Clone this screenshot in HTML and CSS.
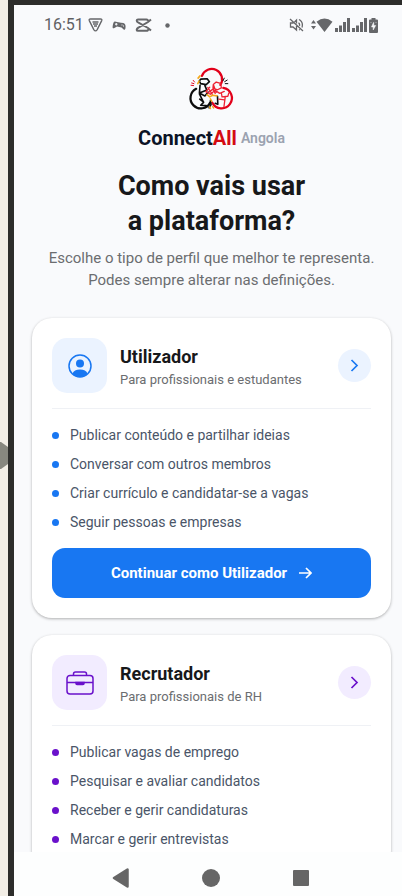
FILE: index.html
```html
<!DOCTYPE html>
<html lang="pt">
<head>
<meta charset="utf-8">
<meta name="viewport" content="width=device-width, initial-scale=1">
<title>ConnectAll Angola</title>
<link rel="stylesheet" href="styles.css">
</head>
<body>
<svg class="edge-arrow" viewBox="0 0 8 27" aria-hidden="true"><path d="M0 0h1l7 5v17l-7 5H0z" fill="#87877f"/></svg>
<div class="device">
  <header class="status">
    <div class="status-left">
      <span class="clock">16:51</span>
      <svg width="15" height="14" viewBox="0 0 15 14" fill="none" stroke="#66676a"><path d="M2.500 1h10q1.800 0 1.200 1.600L9.200 11.600q-1.700 2.600-3.400 0L1.300 2.600Q.7 1 2.500 1z" stroke-width="1.400"/><path d="M4.500 4h6M5 6h5M6 8h3" stroke-width="1.600"/></svg>
      <svg width="14" height="11" viewBox="0 0 14 11"><path d="M3 1.500l2 .6 4 .6 2.400.2c2 .6 2.600 3 2 5.600-.3 1.700-1.800 1.500-2.300.6L9.500 7.500 5 6.500 2.400 8C1 8.800.3 8 .7 6 1.100 3.500 1.600 1.500 3 1.500z" fill="#66676a"/><path d="M3 4.200h2.500M4.250 3v2.500M9.500 5h1M11 6h1" stroke="#f9fafc"/></svg>
      <svg width="17" height="14" viewBox="0 0 17 14" fill="none" stroke="#66676a" stroke-width="2"><path d="M16 1.500L13 4 3.500 9.500q-1.800.9-1.800 2.300.1 1 1.300 1h8.500q1.500 0 1.500-1.600M16 12.500L13 10 3.500 4.700Q1.700 3.800 1.700 2.500q.1-1 1.300-1h8.500Q13 1.500 13 3"/></svg>
      <svg class="more" width="5" height="5" viewBox="0 0 5 5"><circle cx="2.500" cy="2.500" r="2.200" fill="#66676a"/></svg>
    </div>
    <div class="status-right">
      <svg class="mute" width="15" height="14" viewBox="0 0 15 14" fill="none" stroke="#66676a" stroke-width="1.300"><path d="M1 1l13 12M4.500 5H1.500v4h2.500l3.500 3V8M5.500 4l2-2v3.500M9.500 4.800q1.500 1 1 3M10 1.500q4.500 2.300 3 8M10 12l1-.5"/></svg>
      <svg width="22" height="14" viewBox="0 0 22 14" fill="#66676a"><path d="M0 5.500L2.500 2 5 5.500zM0 8h5l-2.500 3.500zM5.500 3.700q8-6.500 16 0L13.500 14z"/></svg>
      <svg width="15" height="14" viewBox="0 0 15 14" fill="#66676a"><path d="M0 10h3v4H0zM4 7.500h3V14H4zM8 4h3v10H8zM12 0h3v14H12z"/></svg>
      <svg width="15" height="14" viewBox="0 0 15 14" fill="#66676a"><path d="M0 10h3v4H0zM4 7.500h3V14H4zM8 4h3v10H8zM12 0h3v14H12z"/></svg>
      <svg width="9" height="15" viewBox="0 0 9 15"><path d="M2.500 0h4v1.500H8q1 0 1 1V14q0 1-1 1H1q-1 0-1-1V2.500q0-1 1-1h1.500z" fill="#66676a"/><path d="M4.500 4.500L2.500 9h1.700v3l2.500-4.500H4.800V4.500zM1.500 4.500h1M6.500 4.500h1" fill="#f9fafc" stroke="#f9fafc" stroke-width=".5"/></svg>
    </div>
  </header>

  <main class="page">
    <div class="brand">
      <svg class="logo" width="64" height="56" viewBox="0 -8 198 173" fill="none" stroke-width="7" stroke-linecap="round" stroke-linejoin="round" aria-hidden="true">
        <path d="M68 41A32 32 0 1 1 125 69M134 78A32 32 0 1 1 100 124" stroke="#e2001a"/>
        <path d="M50 81A32 32 0 1 0 93 124" stroke="#0c0c0c"/>
        <path d="M64 51l20-1 7 9-10 9-17-3-4-8zM62 70l-2 24 23-9-6-14M60 94l17 9 10-12M60 97l13 26-9 9 17 1M73 122l-12-9M90 140l6-10-2-12M116 104l1 25-8-3" stroke="#0c0c0c" stroke-width="5"/>
        <path d="M133 56l4-8M138 59l8-5M140 65h8" stroke="#0c0c0c" stroke-width="3"/>
        <path d="M36 63l7 2M34 70l8 1M41 55l4 5" stroke="#e2001a" stroke-width="3"/>
        <path d="M103 68l9-8 14 4 2 14-12 6-14-5zM92 76l-12 14 14 8 14-12 15 9 14-6M128 94l2 12 18-2 3-10M140 106l-4 30M90 91l12-9 7 13M120 113l18 2M86 77l14 21M104 70l8 22" stroke="#ee2233" stroke-width="4"/>
        <path d="M56 48l6-7M59 57l-4 8M84 99l8 7 9-5 13 2M98 119l-4-7M92 137l2 5M101 136l3 4" stroke="#f5a81c" stroke-width="5"/>
      </svg>
      <p class="wordmark"><span class="name">Connect<span class="name-accent">All</span></span> <span class="country">Angola</span></p>
    </div>
    <h1>Como vais usar<br>a plataforma?</h1>
    <p class="lead">Escolhe o tipo de perfil que melhor te representa. Podes sempre alterar nas definições.</p>

    <section class="card user" aria-labelledby="t-user">
      <div class="card-head">
        <span class="tile">
          <svg width="24" height="24" viewBox="0 0 24 24" fill="none"><circle cx="12" cy="12" r="11" stroke="currentColor" stroke-width="1.500"/><circle cx="12" cy="9.500" r="4" fill="currentColor"/><path d="M4.500 19.500Q6 15.500 12 15.500t7.500 4Q16.500 23 12 23t-7.500-3.500z" fill="currentColor"/></svg>
        </span>
        <div class="titles">
          <h2 id="t-user">Utilizador</h2>
          <p>Para profissionais e estudantes</p>
        </div>
        <button class="go" type="button" aria-label="Utilizador"><svg width="9" height="13" viewBox="0 0 9 13"><path d="M1.500 1l5.500 5.500L1.500 12"/></svg></button>
      </div>
      <ul>
        <li>Publicar conteúdo e partilhar ideias</li>
        <li>Conversar com outros membros</li>
        <li>Criar currículo e candidatar-se a vagas</li>
        <li>Seguir pessoas e empresas</li>
      </ul>
      <button class="cta" type="button">Continuar como Utilizador
        <svg width="14" height="12" viewBox="0 0 14 12"><path d="M1 6h12M8 1l5 5-5 5"/></svg>
      </button>
    </section>

    <section class="card recruiter" aria-labelledby="t-rec">
      <div class="card-head">
        <span class="tile">
          <svg width="28" height="24" viewBox="0 0 28 24" fill="none" stroke="currentColor" stroke-width="1.500"><rect x="1" y="4.500" width="26" height="18.500" rx="3"/><path d="M7.500 4.500V3q0-2 2-2h9q2 0 2 2v1.500M1 11.500h26"/><path d="M10 11.500h8v1q0 1-1 1h-6q-1 0-1-1z" fill="currentColor"/></svg>
        </span>
        <div class="titles">
          <h2 id="t-rec">Recrutador</h2>
          <p>Para profissionais de RH</p>
        </div>
        <button class="go" type="button" aria-label="Recrutador"><svg width="9" height="13" viewBox="0 0 9 13"><path d="M1.500 1l5.500 5.500L1.500 12"/></svg></button>
      </div>
      <ul>
        <li>Publicar vagas de emprego</li>
        <li>Pesquisar e avaliar candidatos</li>
        <li>Receber e gerir candidaturas</li>
        <li>Marcar e gerir entrevistas</li>
      </ul>
    </section>
  </main>

  <nav class="navbar">
    <button type="button" aria-label="Voltar"><svg width="18" height="20" viewBox="0 0 18 20"><path d="M15.500 1.500v17L2 10z" fill="#666" stroke="#666" stroke-width="2.500" stroke-linejoin="round"/></svg></button>
    <button type="button" aria-label="Início"><svg width="18" height="18" viewBox="0 0 18 18"><circle cx="9" cy="9" r="9" fill="#666"/></svg></button>
    <button type="button" aria-label="Recentes"><svg width="18" height="18" viewBox="0 0 18 18"><rect x="1" y="1" width="16" height="16" rx="1" fill="#666"/></svg></button>
  </nav>
</div>
</body>
</html>
```
FILE: styles.css
```css
* {
  box-sizing: border-box;
  margin: 0;
  padding: 0;
}

body {
  display: flex;
  height: 100vh;
  overflow: hidden;
  padding-left: 8px;
  background: #f2eee6;
  font-family: Roboto, "Liberation Sans", sans-serif;
  color: #17181a;
}

svg {
  display: block;
  flex: none;
}

button {
  border: 0;
  background: none;
  font: inherit;
  color: inherit;
}

.edge-arrow {
  position: absolute;
  left: 0;
  top: 442px;
  width: 8px;
  height: 27px;
}

.device {
  flex: 1;
  min-width: 0;
  display: flex;
  flex-direction: column;
  border: solid #2d2d2b;
  border-width: 5px 0 0 6px;
  background: #f9fafc;
}

.status {
  flex: none;
  display: flex;
  justify-content: space-between;
  align-items: center;
  height: 40px;
  padding: 0 24px 0 30px;
}

.status-left,
.status-right {
  display: flex;
  align-items: center;
}

.status-left {
  gap: 9px;
}

.status-right {
  gap: 2px;
}

.mute {
  margin-right: 5px;
}

.more {
  margin-left: 4px;
}

.clock {
  margin-right: -5px;
  font-size: 16px;
  line-height: 20px;
  color: #5f6063;
}

.page {
  flex: 1;
  min-height: 0;
  overflow: hidden;
  padding: 15px 11px 0 18px;
}

.brand {
  display: flex;
  flex-direction: column;
  align-items: center;
}

.wordmark {
  display: flex;
  align-items: center;
  gap: 4px;
  margin-top: 10px;
  line-height: 24px;
}

.name {
  font-size: 20px;
  font-weight: 700;
  color: #0b1326;
}

.name-accent {
  color: #d40b12;
}

.country {
  font-size: 14px;
  font-weight: 600;
  color: #9ba2b0;
}

h1 {
  margin-top: 19px;
  font-size: 27px;
  line-height: 35px;
  font-weight: 700;
  text-align: center;
}

.lead {
  margin-top: 8px;
  font-size: 15px;
  line-height: 22px;
  text-align: center;
  color: #6b6d70;
}

.card {
  margin-top: 17px;
  padding: 20px;
  border-radius: 20px;
  background: #fff;
  box-shadow: 0 1px 3px rgba(0, 0, 0, .3);
}

.lead + .card {
  margin-top: 27px;
}

.user {
  --accent: #1877f2;
  --tint: #ebf3ff;
}

.recruiter {
  --accent: #6a11cb;
  --tint: #f2ecff;
}

.card-head {
  display: flex;
  align-items: center;
  padding-bottom: 15px;
  border-bottom: 1px solid #eff1f5;
}

.tile {
  display: grid;
  place-items: center;
  width: 55px;
  height: 55px;
  border-radius: 15px;
  background: var(--tint);
  color: var(--accent);
}

.titles {
  flex: 1;
  margin-left: 13px;
  padding-top: 4px;
}

h2 {
  font-size: 18px;
  line-height: 24px;
  font-weight: 700;
}

.titles p {
  font-size: 13px;
  line-height: 22px;
  color: #6b6d70;
}

.go {
  display: grid;
  place-items: center;
  width: 33px;
  height: 33px;
  border-radius: 50%;
  background: var(--tint);
}

.go path {
  fill: none;
  stroke: var(--accent);
  stroke-width: 1.7;
}

ul {
  display: grid;
  gap: 8px;
  margin-top: 16px;
  list-style: none;
}

li {
  display: flex;
  align-items: center;
  gap: 11px;
  font-size: 14px;
  line-height: 21px;
  color: #4a5568;
}

li::before {
  content: "";
  width: 7px;
  height: 7px;
  border-radius: 50%;
  background: var(--accent);
}

.cta {
  display: flex;
  align-items: center;
  justify-content: center;
  gap: 11px;
  width: 100%;
  height: 50px;
  margin-top: 15px;
  border-radius: 13px;
  background: var(--accent);
  color: #fff;
  font-size: 15px;
  font-weight: 700;
}

.cta path {
  fill: none;
  stroke: #fff;
  stroke-width: 1.7;
}

.navbar {
  flex: none;
  display: flex;
  justify-content: center;
  align-items: center;
  gap: 72px;
  height: 44px;
  padding: 8px 13px 0 18px;
  background: #fdfefe;
}
```
